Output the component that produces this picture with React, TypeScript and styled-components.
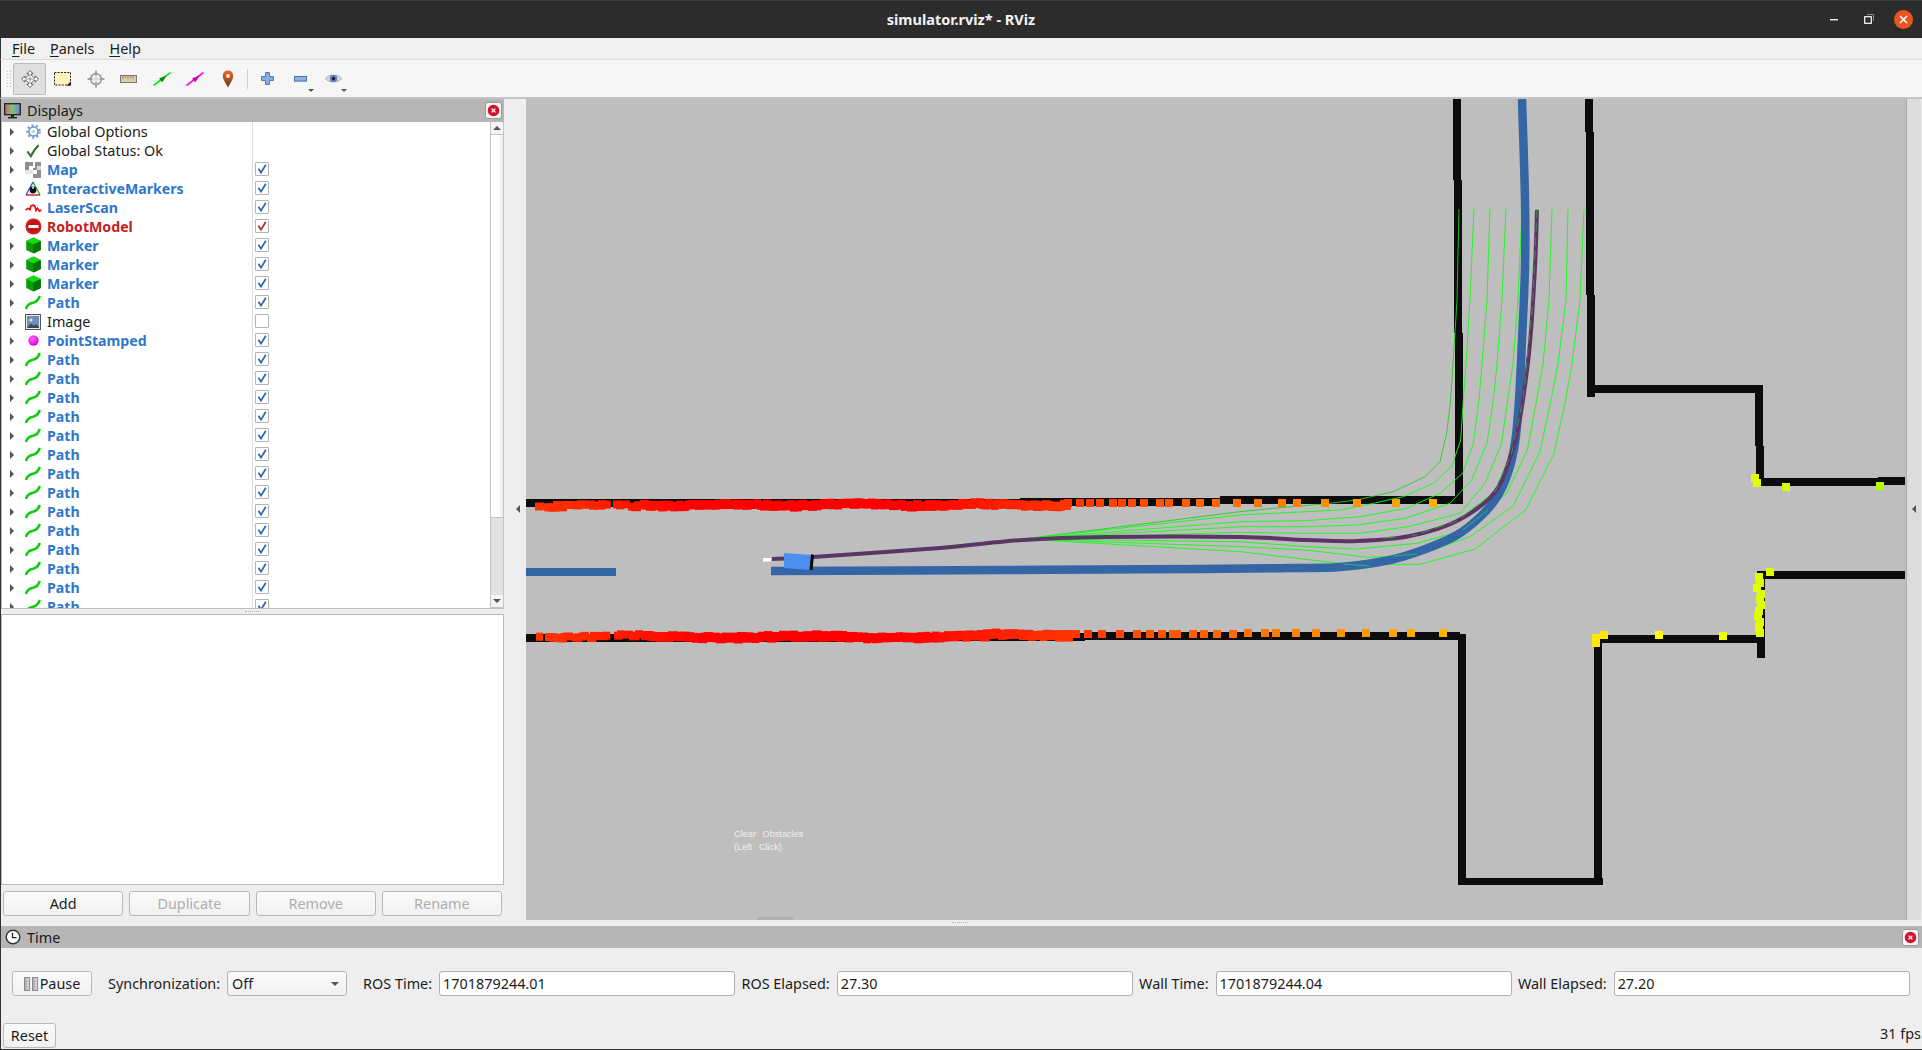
import React from "react";
import styled, { createGlobalStyle } from "styled-components";

const Global = createGlobalStyle`
  html, body { margin: 0; padding: 0; background: #eeeeee; overflow: hidden; }
  * { box-sizing: border-box; }
  #root { width: 1922px; height: 1050px; }
`;

const FONT = `"Noto Sans", "Open Sans", "DejaVu Sans", sans-serif`;

const Shell = styled.div`
  width: 1922px; height: 1050px; display: flex; flex-direction: column;
  font-family: ${FONT}; font-size: 14.4px; color: #1c1c1c; background: #eeeeee;
  overflow: hidden;
`;
const TitleBar = styled.div`
  height: 38px; flex: none; background: #2c2c2c; border-top: 1px solid #3d3d3d; padding-bottom: 2px;
  display: flex; align-items: center; justify-content: center; position: relative;
  color: #f2f2f2; font-weight: 700; font-size: 14.5px;
`;
const WindowButtons = styled.div`
  position: absolute; right: 9px; top: 8px; display: flex; align-items: center; gap: 0;
`;
const WinSlot = styled.div`
  width: 34px; height: 20px; display: flex; align-items: center; justify-content: center;
`;
const WinClose = styled.div`
  width: 19px; height: 19px; border-radius: 50%; background: #e95420; margin-left: 8px;
  display: flex; align-items: center; justify-content: center;
`;
const MenuBar = styled.div`
  height: 22px; flex: none; background: #f0f0f0; border-bottom: 1px solid #dcdcdc;
  display: flex; align-items: center; padding-left: 11px; gap: 15px;
  border-left: 1px solid #333;
`;
const MenuItem = styled.span`
  u { text-underline-offset: 2px; }
`;
const ToolBar = styled.div`
  height: 39px; flex: none; background: #f6f6f6; border-bottom: 2px solid #c4c4c4;
  display: flex; align-items: center; padding-left: 5px; border-left: 1px solid #333;
`;
const Grip = styled.div`
  width: 5px; height: 18px; margin-right: 2px;
  background-image: radial-gradient(#bdbdbd 0.7px, transparent 0.8px);
  background-size: 3px 3px;
`;
const Tool = styled.div<{ $active?: boolean }>`
  width: 33px; height: 32px; display: flex; align-items: center; justify-content: center;
  position: relative; border-radius: 2px;
  background: ${(p) => (p.$active ? "#dfdfdf" : "transparent")};
  box-shadow: ${(p) => (p.$active ? "inset 0 0 0 1px #bcbcbc" : "none")};
`;
const ToolDrop = styled.span`
  position: absolute; right: 3px; bottom: 3px; width: 0; height: 0;
  border-left: 3px solid transparent; border-right: 3px solid transparent; border-top: 3px solid #555;
`;
const ToolSep = styled.div`
  width: 1px; height: 20px; background: #cfcfcf; margin: 0 3px 0 3px;
`;
const Main = styled.div`
  height: 827px; flex: none; display: flex; border-left: 1px solid #333;
`;
const Dock = styled.div`
  width: 503px; flex: none; display: flex; flex-direction: column;
`;
const PanelTitle = styled.div`
  height: 23px; flex: none; background: #b6b6b6; display: flex; align-items: center;
  padding: 0 2px 0 3px; gap: 6px; color: #1a1a1a;
`;
const PanelName = styled.span`
  flex: 1;
`;
const CloseBtn = styled.div`
  width: 17px; height: 17px; background: #f7f7f7; border: 1px solid #999; border-radius: 3px;
  display: flex; align-items: center; justify-content: center;
`;
const TreeFrame = styled.div`
  height: 487px; flex: none; display: flex; background: #fff;
  border-left: 1px solid #bdbdbd; border-bottom: 1px solid #bdbdbd;
`;
const Tree = styled.div`
  flex: 1; overflow: hidden; position: relative;
`;
const Row = styled.div`
  height: 19px; display: flex; align-items: center;
`;
const NameCell = styled.div`
  width: 251px; flex: none; height: 100%; display: flex; align-items: center;
  border-right: 1px solid #dedede;
`;
const Expander = styled.span`
  width: 0; height: 0; margin-left: 8px; flex: none;
  border-top: 4px solid transparent; border-bottom: 4px solid transparent; border-left: 4px solid #555;
`;
const RowIcon = styled.span`
  width: 18px; height: 18px; margin-left: 10px; flex: none; display: flex;
  align-items: center; justify-content: center;
`;
const RowLabel = styled.span<{ $tone: "plain" | "blue" | "red" }>`
  margin-left: 5px; white-space: nowrap;
  font-size: ${(p) => (p.$tone === "plain" ? "14.4px" : "14.15px")};
  font-weight: ${(p) => (p.$tone === "plain" ? 400 : 700)};
  color: ${(p) => (p.$tone === "blue" ? "#2e77c9" : p.$tone === "red" ? "#c42222" : "#1c1c1c")};
`;
const CheckBox = styled.span`
  width: 14px; height: 14px; margin: -1px 0 0 2px; flex: none; background: #fff;
  border: 1px solid #b4b4b4; border-radius: 1px; display: flex; align-items: center; justify-content: center;
`;
const Scroll = styled.div`
  width: 14px; flex: none; display: flex; flex-direction: column;
  border-left: 1px solid #c4c4c4; border-right: 1px solid #c4c4c4; background: #e2e2e2;
`;
const ScrollBtn = styled.div`
  height: 13px; flex: none; background: #f4f4f4; display: flex; align-items: center; justify-content: center;
  border-bottom: 1px solid #c4c4c4;
`;
const ScrollThumb = styled.div`
  height: 383px; flex: none; background: linear-gradient(90deg, #fff 55%, #ececec);
  border-bottom: 1px solid #c4c4c4;
`;
const ScrollGroove = styled.div`
  flex: 1;
`;
const TriUp = styled.span`
  width: 0; height: 0; border-left: 4px solid transparent; border-right: 4px solid transparent; border-bottom: 4px solid #555;
`;
const TriDown = styled.span`
  width: 0; height: 0; border-left: 4px solid transparent; border-right: 4px solid transparent; border-top: 4px solid #555;
`;
const SplitV = styled.div`
  height: 5px; flex: none; display: flex; align-items: center; justify-content: center;
`;
const Dots = styled.div`
  width: 16px; height: 1px; border-top: 1px dotted #b0b0b0;
`;
const Description = styled.div`
  height: 271px; flex: none; background: #fff; border: 1px solid #b8b8b8;
`;
const Buttons = styled.div`
  display: flex; gap: 6px; padding: 6px 2px 0 2px;
`;
const PushButton = styled.div<{ $off?: boolean; $w?: number }>`
  height: 25px; flex: ${(p) => (p.$w ? "none" : "1")}; width: ${(p) => (p.$w ? `${p.$w}px` : "auto")};
  display: flex; align-items: center; justify-content: center; gap: 2px;
  background: linear-gradient(#fbfbfb, #f0f0f0); border: 1px solid #b9b9b9; border-radius: 3px;
  color: ${(p) => (p.$off ? "#aeaeae" : "#1c1c1c")};
`;
const LeftStrip = styled.div`
  width: 22px; flex: none; display: flex; align-items: center; justify-content: flex-end; padding-right: 6px;
  padding-bottom: 8px;
`;
const TriLeft = styled.span`
  width: 0; height: 0; border-top: 4px solid transparent; border-bottom: 4px solid transparent; border-right: 4px solid #555;
`;
const ViewColumn = styled.div`
  width: 1380px; flex: none; display: flex; flex-direction: column; position: relative;
`;
const Canvas = styled.svg`
  display: block; width: 1380px; height: 821px; flex: none; background: #bebebe;
`;
const CanvasHandle = styled.div`
  position: absolute; left: 231px; top: 818px; width: 36px; height: 3px; background: #b0b0b0;
`;
const ViewGap = styled.div`
  flex: 1; display: flex; justify-content: flex-start; padding-left: 426px;
`;
const RightStrip = styled.div`
  width: 15px; height: 821px; flex: none; background: #dcdcdc; border-left: 1px solid #ababab;
  border-bottom-right-radius: 3px; display: flex; align-items: center; justify-content: center;
  padding-bottom: 2px;
`;
const TimePanel = styled.div`
  flex: 1; display: flex; flex-direction: column; border-left: 1px solid #333; border-bottom: 1px solid #333;
`;
const TimeTitle = styled(PanelTitle)`
  height: 22px; padding-right: 3px; padding-left: 4px;
`;
const TimeRow = styled.div`
  display: flex; align-items: center; padding: 23px 12px 0 11px; height: 48px; flex: none;
`;
const FieldLabel = styled.span<{ $ml?: number }>`
  margin-left: ${(p) => p.$ml ?? 6}px; margin-right: 7px; white-space: nowrap; flex: none;
`;
const Combo = styled.div`
  width: 120px; height: 25px; flex: none; display: flex; align-items: center; justify-content: space-between;
  padding: 0 7px 0 4px; background: linear-gradient(#fbfbfb, #f0f0f0); border: 1px solid #b4b4b4; border-radius: 3px;
`;
const FieldInput = styled.div`
  flex: 1; min-width: 0; height: 25px; display: flex; align-items: center; padding-left: 3px;
  background: #fff; border: 1px solid #b0b0b0; border-radius: 3px;
`;
const PauseBars = styled.span`
  width: 14px; height: 14px; flex: none; display: flex; justify-content: space-between;
`;
const PauseBar = styled.span`
  width: 6px; height: 14px; background: linear-gradient(90deg, #aaa, #ddd); border: 1px solid #8c8c8c;
`;
const StatusBar = styled.div`
  flex: 1; display: flex; align-items: flex-start; justify-content: space-between; padding: 27px 1px 0 2px;
`;
const Fps = styled.span`
  margin-top: 1px;
`;

const CloseIcon = () => (
  <svg width="13" height="13" viewBox="0 0 13 13">
    <circle cx="6.5" cy="6.5" r="5.8" fill="#d0142f" />
    <path d="M4.6 4.6l3.8 3.8M8.4 4.6L4.6 8.4" stroke="#fff" strokeWidth="1.3" />
  </svg>
);

const CheckMark = ({ color }: { color: string }) => (
  <svg width="12" height="12" viewBox="0 0 12 12">
    <path d="M2.4 5.8L5 9.6L9.8 1.8" fill="none" stroke={color} strokeWidth="1.7" />
  </svg>
);

const IGear = () => (
  <svg width="15" height="15" viewBox="0 0 16 16">
    <circle cx="8" cy="8" r="6.2" fill="none" stroke="#7a9fdc" strokeWidth="3.2" strokeDasharray="2.1 2.3" />
    <circle cx="8" cy="8" r="4.8" fill="#fff" stroke="#6f96d6" strokeWidth="1.6" />
    <circle cx="8" cy="8" r="2" fill="#c2d4ef" />
  </svg>
);
const ICheck = () => (
  <svg width="14" height="14" viewBox="0 0 16 16">
    <path d="M1.5 8.5L5.5 14C8 9 10.5 5 14.5 1.5" fill="none" stroke="#2f6f2f" strokeWidth="2.2" />
  </svg>
);
const IMap = () => (
  <svg width="16" height="16" viewBox="0 0 16 16">
    <rect width="16" height="16" fill="#8f8f8f" />
    <rect x="4" y="4" width="4" height="4" fill="#fff" />
    <rect x="8" y="0" width="2" height="6" fill="#fff" />
    <rect x="0" y="8" width="8" height="4" fill="#e6e6e6" />
    <rect x="0" y="12" width="8" height="4" fill="#fff" />
    <rect x="8" y="8" width="4" height="4" fill="#fff" />
    <rect x="12" y="4" width="4" height="4" fill="#d8d8d8" />
  </svg>
);
const IInteractive = () => (
  <svg width="16" height="16" viewBox="0 0 16 16">
    <path d="M8 1L1 14" stroke="#2a5ad8" strokeWidth="1.4" />
    <path d="M8 1L15 14" stroke="#1db31d" strokeWidth="1.4" />
    <path d="M1 14H15" stroke="#d81c1c" strokeWidth="1.4" />
    <circle cx="8" cy="9" r="3.4" fill="#111" />
    <circle cx="8" cy="6.8" r="1.1" fill="#ddd" />
  </svg>
);
const ILaser = () => (
  <svg width="17" height="10" viewBox="0 0 17 10">
    <path d="M0.5 7L3 5.5L5 6.5L6 3L8.5 2L10 3.5L11 7.5L12.5 5.5L14.5 8L16.5 7" fill="none" stroke="#f01010" strokeWidth="1.8" />
  </svg>
);
const IRobot = () => (
  <svg width="17" height="17" viewBox="0 0 17 17">
    <circle cx="8.5" cy="8.5" r="8" fill="#d3201f" />
    <circle cx="8.5" cy="8.5" r="6.2" fill="#c01616" />
    <rect x="3.5" y="7" width="10" height="3" fill="#fff" />
  </svg>
);
const IMarker = () => (
  <svg width="15" height="17" viewBox="0 0 15 17">
    <path d="M7.5 0.5L14.8 4V13L7.5 16.5L0.2 13V4Z" fill="#0a9a0a" />
    <path d="M7.5 0.5L14.8 4L7.5 7.5L0.2 4Z" fill="#14dc14" />
    <path d="M7.5 7.5L14.8 4V13L7.5 16.5Z" fill="#067306" />
  </svg>
);
const IPath = () => (
  <svg width="16" height="15" viewBox="0 0 16 15">
    <path d="M1 14C1.8 10.5 4.5 8.5 8 7.8C11.5 7 13.5 5 14.8 1" fill="none" stroke="#0fcc0f" strokeWidth="2.6" />
  </svg>
);
const IImage = () => (
  <svg width="16" height="16" viewBox="0 0 16 16">
    <rect x="0.5" y="0.5" width="15" height="15" fill="#e8e8e8" stroke="#555" />
    <rect x="2" y="2" width="12" height="12" fill="#6f8fb3" />
    <circle cx="6" cy="6" r="1.6" fill="#dfe8f2" />
    <path d="M2 14L6 9.5L9 12L11 10L14 13V14Z" fill="#33465c" />
  </svg>
);
const ISphere = () => (
  <svg width="11" height="11" viewBox="0 0 12 12">
    <defs>
      <radialGradient id="sph" cx="0.4" cy="0.35" r="0.7">
        <stop offset="0" stopColor="#ff66ff" />
        <stop offset="1" stopColor="#d400d4" />
      </radialGradient>
    </defs>
    <circle cx="6" cy="6" r="5.6" fill="url(#sph)" />
  </svg>
);
const IMonitor = () => (
  <svg width="17" height="16" viewBox="0 0 17 16">
    <defs>
      <linearGradient id="mon" x1="0" x2="1" y1="0" y2="0">
        <stop offset="0" stopColor="#c96a6a" />
        <stop offset="0.5" stopColor="#7fc47f" />
        <stop offset="1" stopColor="#6f7fd0" />
      </linearGradient>
    </defs>
    <rect x="0.7" y="0.7" width="15.6" height="11" fill="url(#mon)" stroke="#222" strokeWidth="1.3" />
    <rect x="7" y="12" width="3" height="2" fill="#222" />
    <rect x="4" y="14" width="9" height="1.4" fill="#222" />
  </svg>
);
const IClock = () => (
  <svg width="16" height="16" viewBox="0 0 16 16">
    <circle cx="8" cy="8" r="6.8" fill="#fff" stroke="#333" strokeWidth="1.4" />
    <path d="M7.5 3.8V8.6H11.5" fill="none" stroke="#222" strokeWidth="1.3" />
  </svg>
);

const TMove = () => (
  <svg width="18" height="18" viewBox="0 0 18 18">
    <path d="M9 0.6L12.2 3.8H10.4V5.2L12.8 7.6H14.2V5.8L17.4 9L14.2 12.2V10.4H12.8L10.4 12.8V14.2H12.2L9 17.4L5.8 14.2H7.6V12.8L5.2 10.4H3.8V12.2L0.6 9L3.8 5.8V7.6H5.2L7.6 5.2V3.8H5.8Z" fill="#fff" stroke="#555" strokeWidth="0.9" />
    <path d="M9 4V14M4 9H14" stroke="#888" strokeWidth="0.9" />
  </svg>
);
const TSelect = () => (
  <svg width="17" height="14" viewBox="0 0 17 14">
    <rect x="0.5" y="0.5" width="16" height="12.5" fill="#fbf5bb" stroke="#222" strokeDasharray="2 1.2" />
    <path d="M17 9.5V13.5H12.5Z" fill="#111" />
  </svg>
);
const TFocus = () => (
  <svg width="18" height="18" viewBox="0 0 18 18">
    <circle cx="9" cy="9" r="5.4" fill="#f2f2f2" stroke="#a0a0a0" strokeWidth="1.6" />
    <path d="M9 0.5V5.5M9 12.5V17.5M0.5 9H5.5M12.5 9H17.5" stroke="#a0a0a0" strokeWidth="2" />
    <path d="M9 6V12M6 9H12" stroke="#c4c4c4" strokeWidth="0.8" />
  </svg>
);
const TRuler = () => (
  <svg width="17" height="8" viewBox="0 0 17 8">
    <rect x="0.5" y="0.5" width="16" height="7" fill="#d9d09f" stroke="#777" />
    <path d="M3 1V4M5.5 1V3M8 1V4M10.5 1V3M13 1V4" stroke="#777" strokeWidth="0.8" />
  </svg>
);
const TArrow = ({ a, b }: { a: string; b: string }) => (
  <svg width="18" height="14" viewBox="0 0 18 14">
    <path d="M0.5 13.5L17.5 0.5" stroke={a} strokeWidth="1.8" />
    <path d="M13.5 3.5L6 6.4L9.4 10.2Z" fill={b} />
  </svg>
);
const TPin = () => (
  <svg width="12" height="18" viewBox="0 0 12 18">
    <defs>
      <linearGradient id="pin" x1="0" x2="0" y1="0" y2="1">
        <stop offset="0" stopColor="#e8662a" />
        <stop offset="1" stopColor="#6a3a1e" />
      </linearGradient>
    </defs>
    <path d="M6 17.5C3.5 13 0.8 9.5 0.8 5.8C0.8 2.8 3 0.6 6 0.6C9 0.6 11.2 2.8 11.2 5.8C11.2 9.5 8.5 13 6 17.5Z" fill="url(#pin)" />
    <circle cx="6" cy="6" r="1.9" fill="#f6e6d8" />
  </svg>
);
const TPlus = () => (
  <svg width="13" height="13" viewBox="0 0 13 13">
    <path d="M4.6 0.6H8.4V4.6H12.4V8.4H8.4V12.4H4.6V8.4H0.6V4.6H4.6Z" fill="#8db3e2" stroke="#4472ac" />
  </svg>
);
const TMinus = () => (
  <svg width="13" height="6" viewBox="0 0 13 6">
    <rect x="0.5" y="0.5" width="12" height="4.6" fill="#8db3e2" stroke="#4472ac" />
  </svg>
);
const TEye = () => (
  <svg width="17" height="11" viewBox="0 0 17 11">
    <path d="M0.5 5.5C3.5 1 13.5 1 16.5 5.5C13.5 10 3.5 10 0.5 5.5Z" fill="#dadada" stroke="#999" strokeWidth="0.8" />
    <circle cx="8.5" cy="5.5" r="3.6" fill="#5c78b8" />
    <circle cx="8.5" cy="5.5" r="1.5" fill="#101020" />
  </svg>
);

type Tone = "plain" | "blue" | "red";
type RowData = { name: string; tone: Tone; icon: React.ReactNode; check?: "on" | "off" };

const RowsData: RowData[] = [
  { name: "Global Options", tone: "plain", icon: <IGear /> },
  { name: "Global Status: Ok", tone: "plain", icon: <ICheck /> },
  { name: "Map", tone: "blue", icon: <IMap />, check: "on" },
  { name: "InteractiveMarkers", tone: "blue", icon: <IInteractive />, check: "on" },
  { name: "LaserScan", tone: "blue", icon: <ILaser />, check: "on" },
  { name: "RobotModel", tone: "red", icon: <IRobot />, check: "on" },
  { name: "Marker", tone: "blue", icon: <IMarker />, check: "on" },
  { name: "Marker", tone: "blue", icon: <IMarker />, check: "on" },
  { name: "Marker", tone: "blue", icon: <IMarker />, check: "on" },
  { name: "Path", tone: "blue", icon: <IPath />, check: "on" },
  { name: "Image", tone: "plain", icon: <IImage />, check: "off" },
  { name: "PointStamped", tone: "blue", icon: <ISphere />, check: "on" },
  ...Array.from({ length: 14 }, (): RowData => ({ name: "Path", tone: "blue", icon: <IPath />, check: "on" })),
];

/* ---------- 3D view drawing, in page pixel coordinates ---------- */
const walls: number[][] = [
  [1453, 99, 8, 81], [1454, 180, 8, 153], [1455, 333, 8, 170],
  [1585, 99, 8, 33], [1586, 132, 8, 163], [1587, 295, 8, 102],
  [1590, 385, 173, 8], [1755, 385, 8, 61], [1756, 446, 8, 40],
  [1760, 478, 120, 8], [1878, 477, 27, 8],
  [1757, 571, 148, 8], [1757, 571, 8, 87],
  [1593, 635, 164, 8], [1594, 636, 8, 249],
  [1458, 878, 145, 7], [1458, 634, 8, 251],
  [526, 499, 494, 8], [1020, 498, 200, 8], [1220, 496, 243, 8],
  [526, 634, 364, 8], [890, 633, 195, 8], [1085, 632, 375, 8],
];

const linePts = (p: number[][]) => p.map((q) => q.join(",")).join(" ");
const smooth = (p: number[][]) => {
  let d = `M${p[0][0]} ${p[0][1]}`;
  for (let i = 0; i < p.length - 1; i++) {
    const a = p[Math.max(i - 1, 0)], b = p[i], c = p[i + 1], e = p[Math.min(i + 2, p.length - 1)];
    d += `C${b[0] + (c[0] - a[0]) / 6} ${b[1] + (c[1] - a[1]) / 6} ${c[0] - (e[0] - b[0]) / 6} ${c[1] - (e[1] - b[1]) / 6} ${c[0]} ${c[1]}`;
  }
  return d;
};

const blue = [
  [1522, 99], [1525, 200], [1525, 267], [1522, 340], [1519, 400], [1515, 443], [1508, 473], [1497, 497],
  [1480, 517], [1457, 535], [1423, 550], [1390, 560], [1340, 567], [1290, 568], [1200, 569], [1000, 570], [771, 571],
];
const purple = [
  [1537, 210], [1535, 267], [1530, 343], [1523, 400], [1517, 433], [1512, 452], [1495, 492], [1457, 521],
  [1410, 536], [1357, 541], [1307, 540], [1240, 537], [1107, 537], [1023, 540], [940, 548], [813, 557], [772, 559],
];

const z6 = (p: number[][]) => p.map(([x, y]) => [x / 3 + 1240, y / 3 + 400]);
const fanTop: number[][] = [
  [1459, 1457, 1453], [1474, 1470, 1466], [1490, 1487, 1482], [1506, 1502, 1497], [1522, 1518, 1513],
  [1537, 1533, 1528], [1552, 1549, 1543], [1568, 1566, 1558], [1584, 1580, 1572],
];
const fanBody: number[][][] = [
  [[632, 0], [620, 100], [600, 185], [555, 230], [460, 275], [350, 300], [250, 312], [100, 325], [0, 335]],
  [[670, 0], [662, 120], [635, 200], [580, 250], [490, 290], [400, 310], [300, 330], [0, 345]],
  [[717, 0], [700, 130], [668, 220], [600, 280], [500, 325], [360, 350], [200, 362], [0, 365]],
  [[760, 0], [742, 125], [695, 240], [630, 310], [495, 355], [350, 375], [200, 380], [0, 380]],
  [[803, 0], [785, 130], [735, 250], [660, 340], [505, 380], [360, 400], [200, 400], [0, 397]],
  [[850, 0], [828, 100], [815, 155], [765, 275], [650, 362], [515, 408], [360, 422], [200, 420], [0, 408]],
  [[890, 0], [862, 150], [800, 280], [668, 392], [530, 430], [350, 447], [200, 440], [0, 425]],
  [[933, 0], [900, 155], [820, 318], [690, 410], [535, 465], [380, 472], [200, 450], [0, 440]],
  [[977, 0], [942, 160], [857, 330], [705, 447], [540, 493], [460, 493], [300, 490], [0, 455]],
];
const fan = fanBody.map((b, i) => [
  [fanTop[i][0], 209], [fanTop[i][1], 300], [fanTop[i][2], 364],
  ...z6(b),
  [1023, 539], [940, 547],
]);
const overlaySegs: number[][][] = [
  [[1537, 209], [1533, 300], [1523, 400], [1516, 433], [1512, 452], [1495, 492], [1457, 521], [1412, 536]],
  [[1463, 530], [1488, 510]],
  [[1343, 564], [1370, 566]],
  [[1393, 556], [1417, 554]],
  [[1383, 538], [1395, 537]],
];

const scanColor = (x: number, y: number) => {
  const d = Math.hypot(x - 800, y - 560);
  const h = Math.max(0, (d - 120) / 680) * 55;
  return `hsl(${h.toFixed(0)},100%,50%)`;
};

/* deterministic jitter for the laser returns */
const noise = (n: number) => {
  const s = Math.sin(n * 12.9898) * 43758.5453;
  return s - Math.floor(s);
};

const scan: number[][] = [];
for (let x = 532; x < 1064; x += 3) {
  const sparse = x < 640;
  if (sparse && noise(x) < 0.35) continue;
  const wob = sparse ? 1.5 : 0;
  scan.push([x, 500 + wob + Math.sin(x * 0.05) * 1 + noise(x + 1) * 2.6 - 1, 7 + noise(x + 2) * 3, 8 + (sparse ? 0 : 1)]);
  scan.push([x + 1, 631 + Math.sin(x * 0.037) * 1 + noise(x + 3) * 2.8 - (x > 980 ? 2 : 0), 7 + noise(x + 4) * 3, 8 + (sparse ? 0 : 1)]);
}
[1068, 1080, 1090, 1100, 1113, 1122, 1132, 1144, 1160, 1169, 1186, 1200, 1216, 1237, 1258, 1282, 1297, 1325, 1357, 1396, 1433]
  .forEach((x) => scan.push([x - 4, 499, 8, 8]));
[1068, 1076, 1088, 1102, 1120, 1137, 1150, 1162, 1173, 1177, 1193, 1204, 1217, 1233, 1248, 1265, 1276, 1296, 1316, 1341, 1366, 1393, 1411, 1443]
  .forEach((x, i) => scan.push([x - 4, i < 14 ? 630 : 629, 8, 8]));
const yellow = [
  [1755, 478], [1757, 483], [1786, 487], [1880, 486], [1770, 572],
  [1759, 577], [1760, 583], [1757, 588], [1761, 594], [1760, 599], [1761, 605], [1759, 611], [1758, 616], [1760, 622], [1759, 627], [1760, 633],
  [1596, 638], [1596, 643], [1604, 635], [1659, 635], [1723, 636],
];
yellow.forEach(([x, y]) => scan.push([x - 4, y - 4, 8, 8]));

const CanvasArt = () => (
  <Canvas viewBox="526 99 1380 821">
    {walls.map(([x, y, w, h], i) => (
      <rect key={i} x={x} y={y} width={w} height={h} fill="#0c0c0c" />
    ))}
    {fan.map((p, i) => (
      <polyline key={i} points={linePts(p)} fill="none" stroke={i === 0 ? "#1fd01f" : "#10ff10"} strokeWidth="0.9" />
    ))}
    <rect x="526" y="568" width="90" height="8" fill="#3465a4" />
    <path d={smooth(blue)} fill="none" stroke="#3465a4" strokeWidth="8.5" />
    <path d={smooth(purple)} fill="none" stroke="#5c3566" strokeWidth="4" />
    {overlaySegs.map((p, i) => (
      <polyline key={i} points={linePts(p)} fill="none" stroke={i === 0 ? "#3fa04f" : "#1fd060"} strokeWidth="0.8" strokeDasharray={i === 0 ? "9 5" : undefined} />
    ))}
    <rect x="763" y="558" width="8" height="3.5" fill="#ffffff" />
    <polygon points="784,553 812,555 810,570 784,568" fill="#4c8df0" />
    <polygon points="811,554 814,555 812.5,570 809.5,570" fill="#0a0a0a" />
    {scan.map(([x, y, w, h], i) => (
      <rect key={i} x={x} y={y} width={w} height={h} fill={scanColor(x, y)} />
    ))}
    <text x="734" y="837" fontFamily="Liberation Sans" fontSize="9.2" wordSpacing="4" fill="#efefef">Clear Obstacles</text>
    <text x="734" y="850" fontFamily="Liberation Sans" fontSize="9.2" wordSpacing="4" fill="#efefef">(Left Click)</text>
  </Canvas>
);

export default function App() {
  return (
    <Shell>
      <Global />
      <TitleBar>
        simulator.rviz* - RViz
        <WindowButtons>
          <WinSlot>
            <svg width="10" height="4" viewBox="0 0 10 4"><rect y="2" width="8" height="1.4" fill="#eee" /></svg>
          </WinSlot>
          <WinSlot>
            <svg width="10" height="10" viewBox="0 0 10 10">
              <path d="M3 0.5H9.5V7" fill="none" stroke="#888" />
              <rect x="0.7" y="2.7" width="6.6" height="6.6" fill="none" stroke="#f0f0f0" strokeWidth="1.3" />
            </svg>
          </WinSlot>
          <WinClose>
            <svg width="9" height="9" viewBox="0 0 9 9"><path d="M1 1l7 7M8 1L1 8" stroke="#fff" strokeWidth="1.5" /></svg>
          </WinClose>
        </WindowButtons>
      </TitleBar>
      <MenuBar>
        <MenuItem><u>F</u>ile</MenuItem>
        <MenuItem><u>P</u>anels</MenuItem>
        <MenuItem><u>H</u>elp</MenuItem>
      </MenuBar>
      <ToolBar>
        <Grip />
        <Tool $active><TMove /></Tool>
        <Tool><TSelect /></Tool>
        <Tool><TFocus /></Tool>
        <Tool><TRuler /></Tool>
        <Tool><TArrow a="#10f010" b="#0a8a0a" /></Tool>
        <Tool><TArrow a="#ff10e8" b="#c000b0" /></Tool>
        <Tool><TPin /></Tool>
        <ToolSep />
        <Tool><TPlus /></Tool>
        <Tool><TMinus /><ToolDrop /></Tool>
        <Tool><TEye /><ToolDrop /></Tool>
      </ToolBar>
      <Main>
        <Dock>
          <PanelTitle>
            <IMonitor />
            <PanelName>Displays</PanelName>
            <CloseBtn><CloseIcon /></CloseBtn>
          </PanelTitle>
          <TreeFrame>
            <Tree>
              {RowsData.map((r, i) => (
                <Row key={i}>
                  <NameCell>
                    <Expander />
                    <RowIcon>{r.icon}</RowIcon>
                    <RowLabel $tone={r.tone}>{r.name}</RowLabel>
                  </NameCell>
                  {r.check && (
                    <CheckBox>
                      {r.check === "on" && <CheckMark color={r.tone === "red" ? "#b02a2a" : "#2a66b0"} />}
                    </CheckBox>
                  )}
                </Row>
              ))}
            </Tree>
            <Scroll>
              <ScrollBtn><TriUp /></ScrollBtn>
              <ScrollThumb />
              <ScrollGroove />
              <ScrollBtn><TriDown /></ScrollBtn>
            </Scroll>
          </TreeFrame>
          <SplitV><Dots /></SplitV>
          <Description />
          <Buttons>
            <PushButton>Add</PushButton>
            <PushButton $off>Duplicate</PushButton>
            <PushButton $off>Remove</PushButton>
            <PushButton $off>Rename</PushButton>
          </Buttons>
        </Dock>
        <LeftStrip><TriLeft /></LeftStrip>
        <ViewColumn>
          <CanvasArt />
          <CanvasHandle />
          <ViewGap><SplitV><Dots /></SplitV></ViewGap>
        </ViewColumn>
        <RightStrip><TriLeft /></RightStrip>
      </Main>
      <TimePanel>
        <TimeTitle>
          <IClock />
          <PanelName>Time</PanelName>
          <CloseBtn><CloseIcon /></CloseBtn>
        </TimeTitle>
        <TimeRow>
          <PushButton $w={80}><PauseBars><PauseBar /><PauseBar /></PauseBars>Pause</PushButton>
          <FieldLabel $ml={16}>Synchronization:</FieldLabel>
          <Combo>Off<TriDown /></Combo>
          <FieldLabel $ml={16}>ROS Time:</FieldLabel>
          <FieldInput>1701879244.01</FieldInput>
          <FieldLabel>ROS Elapsed:</FieldLabel>
          <FieldInput>27.30</FieldInput>
          <FieldLabel>Wall Time:</FieldLabel>
          <FieldInput>1701879244.04</FieldInput>
          <FieldLabel>Wall Elapsed:</FieldLabel>
          <FieldInput>27.20</FieldInput>
        </TimeRow>
        <StatusBar>
          <PushButton $w={53}>Reset</PushButton>
          <Fps>31 fps</Fps>
        </StatusBar>
      </TimePanel>
    </Shell>
  );
}
